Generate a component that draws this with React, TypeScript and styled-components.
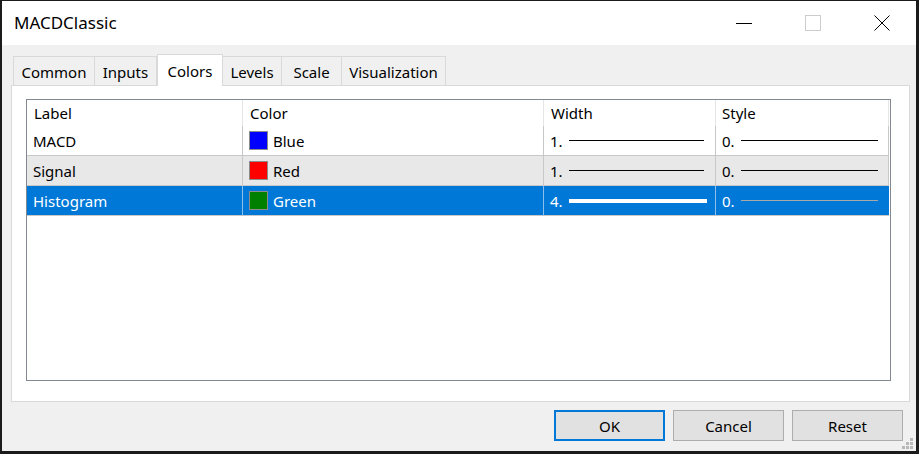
import React from "react";
import styled, { createGlobalStyle } from "styled-components";

const Global = createGlobalStyle`
  html, body { margin: 0; padding: 0; background: #1b1b1b; }
  body { font-family: "Noto Sans", "Open Sans", sans-serif; }
  * { box-sizing: border-box; }
`;

const Screen = styled.div`
  width: 919px;
  height: 454px;
  padding: 1px 0 0 2px;
  overflow: hidden;
`;

const Window = styled.div`
  position: relative;
  width: 914px;
  height: 450px;
  background: #f0f0f0;
  display: flex;
  flex-direction: column;
`;

const TitleBar = styled.div`
  height: 44px;
  background: #ffffff;
  display: flex;
  align-items: center;
  flex-shrink: 0;
`;

const Title = styled.div`
  flex: 1;
  padding-left: 12px;
  font-size: 17px;
  color: #000;
  padding-bottom: 1px;
`;

const CaptionButton = styled.div`
  width: 69px;
  height: 44px;
  display: flex;
  align-items: center;
  justify-content: center;
`;

const Body = styled.div`
  flex: 1;
  display: flex;
  flex-direction: column;
  padding: 9px 6px 0 9px;
`;

const TabStrip = styled.div`
  display: flex;
  align-items: flex-end;
  height: 32px;
  padding-left: 2px;
  position: relative;
  z-index: 1;
  margin-bottom: -1px;
`;

const Tab = styled.div<{ $w: number; $active?: boolean }>`
  width: ${(p) => p.$w}px;
  height: ${(p) => (p.$active ? 32 : 30)}px;
  border: 1px solid #d9d9d9;
  border-bottom: ${(p) => (p.$active ? "none" : "1px solid #d9d9d9")};
  border-left: ${(p) => (p.$active ? "1px solid #d9d9d9" : "none")};
  background: ${(p) => (p.$active ? "#ffffff" : "#f0f0f0")};
  display: flex;
  align-items: center;
  justify-content: center;
  font-size: 15px;
  color: #000;
  padding-top: ${(p) => (p.$active ? 0 : 1)}px;
  &:first-child { border-left: 1px solid #d9d9d9; }
`;

const Panel = styled.div`
  width: 899px;
  height: 317px;
  background: #ffffff;
  border: 1px solid #d9d9d9;
  padding: 13px 18px 20px 14px;
  display: flex;
`;

const List = styled.div`
  flex: 1;
  border: 1px solid #828790;
  background: #fff;
  display: flex;
  flex-direction: column;
`;

const Grid = styled.div`
  display: grid;
  grid-template-columns: 216px 301px 172px 173px;
`;

const HeadCell = styled.div<{ $last?: boolean }>`
  height: 26px;
  display: flex;
  align-items: center;
  padding-left: ${(p) => (p.$last ? 6 : 7)}px;
  font-size: 15px;
  color: #000;
  border-right: 1px solid #e5e5e5;
`;

const Cell = styled.div<{ $sel?: boolean; $alt?: boolean }>`
  height: 30px;
  display: flex;
  align-items: center;
  padding-left: 6px;
  font-size: 15px;
  color: ${(p) => (p.$sel ? "#ffffff" : "#000")};
  background: ${(p) => (p.$sel ? "#0078d7" : p.$alt ? "#e8e8e8" : "#ffffff")};
  border-right: 1px solid ${(p) => (p.$sel ? "#8fbfe8" : "#c8c8c8")};
  border-bottom: 1px solid #c8c8c8;
  &:last-child { border-right: none; }
`;

const Swatch = styled.span<{ $c: string }>`
  width: 19px;
  height: 19px;
  background: ${(p) => p.$c};
  border: 1px solid #8c8c8c;
  margin-right: 5px;
  flex-shrink: 0;
`;

const Num = styled.span`
  width: 19px;
  flex-shrink: 0;
`;

const Stroke = styled.span<{ $w: number; $len: number; $c: string }>`
  display: block;
  width: ${(p) => p.$len}px;
  height: ${(p) => p.$w}px;
  background: ${(p) => p.$c};
`;

const Footer = styled.div`
  display: flex;
  justify-content: flex-end;
  gap: 8px;
  padding: 8px 7px 0 0;
`;

const Button = styled.div<{ $default?: boolean }>`
  width: 111px;
  height: 31px;
  background: #e1e1e1;
  border: ${(p) => (p.$default ? "2px solid #0078d7" : "1px solid #adadad")};
  display: flex;
  align-items: center;
  justify-content: center;
  font-size: 15px;
  color: #000;
`;

const Grip = styled.svg`
  position: absolute;
  right: 2px;
  bottom: 1px;
`;

type Row = { label: string; color: string; cname: string; width: string; w: number; style: string };

const rows: Row[] = [
  { label: "MACD", color: "#0000ff", cname: "Blue", width: "1.", w: 1, style: "0." },
  { label: "Signal", color: "#ff0000", cname: "Red", width: "1.", w: 1, style: "0." },
  { label: "Histogram", color: "#008000", cname: "Green", width: "4.", w: 4, style: "0." },
];

const tabs: { name: string; w: number }[] = [
  { name: "Common", w: 82 },
  { name: "Inputs", w: 62 },
  { name: "Colors", w: 66 },
  { name: "Levels", w: 59 },
  { name: "Scale", w: 60 },
  { name: "Visualization", w: 104 },
];

export default function App() {
  return (
    <Screen>
      <Global />
      <Window>
        <TitleBar>
          <Title>MACDClassic</Title>
          <CaptionButton>
            <svg width="16" height="16" viewBox="0 0 16 16">
              <line x1="0" y1="8.5" x2="16" y2="8.5" stroke="#000" strokeWidth="1" />
            </svg>
          </CaptionButton>
          <CaptionButton>
            <svg width="16" height="16" viewBox="0 0 16 16">
              <rect x="0.5" y="0.5" width="15" height="15" fill="none" stroke="#cccccc" strokeWidth="1" />
            </svg>
          </CaptionButton>
          <CaptionButton>
            <svg width="16" height="16" viewBox="0 0 16 16">
              <path d="M0.5 0.5 L15.5 15.5 M15.5 0.5 L0.5 15.5" stroke="#000" strokeWidth="1" />
            </svg>
          </CaptionButton>
        </TitleBar>
        <Body>
          <TabStrip>
            {tabs.map((t) => (
              <Tab key={t.name} $w={t.w} $active={t.name === "Colors"}>
                {t.name}
              </Tab>
            ))}
          </TabStrip>
          <Panel>
            <List>
              <Grid>
                <HeadCell>Label</HeadCell>
                <HeadCell>Color</HeadCell>
                <HeadCell>Width</HeadCell>
                <HeadCell $last>Style</HeadCell>
                {rows.map((r, i) => {
                  const sel = i === 2;
                  const alt = i === 1;
                  const fg = sel ? "#ffffff" : "#000000";
                  return (
                    <React.Fragment key={r.label}>
                      <Cell $sel={sel} $alt={alt}>{r.label}</Cell>
                      <Cell $sel={sel} $alt={alt}>
                        <Swatch $c={r.color} />
                        {r.cname}
                      </Cell>
                      <Cell $sel={sel} $alt={alt}>
                        <Num>{r.width}</Num>
                        <Stroke $w={r.w === 4 ? 4 : 1} $len={r.w === 4 ? 138 : 135} $c={fg} />
                      </Cell>
                      <Cell $sel={sel} $alt={alt}>
                        <Num>{r.style}</Num>
                        <Stroke $w={1} $len={137} $c={sel ? "#a9a9a9" : "#000"} />
                      </Cell>
                    </React.Fragment>
                  );
                })}
              </Grid>
            </List>
          </Panel>
          <Footer>
            <Button $default>OK</Button>
            <Button>Cancel</Button>
            <Button>Reset</Button>
          </Footer>
        </Body>
        <Grip width="12" height="12" viewBox="0 0 12 12">
          <rect x="8" y="0" width="3" height="3" fill="#b8b8b8" />
          <rect x="4" y="4" width="3" height="3" fill="#b8b8b8" />
          <rect x="8" y="4" width="3" height="3" fill="#b8b8b8" />
          <rect x="0" y="8" width="3" height="3" fill="#b8b8b8" />
          <rect x="4" y="8" width="3" height="3" fill="#b8b8b8" />
          <rect x="8" y="8" width="3" height="3" fill="#b8b8b8" />
        </Grip>
      </Window>
    </Screen>
  );
}
